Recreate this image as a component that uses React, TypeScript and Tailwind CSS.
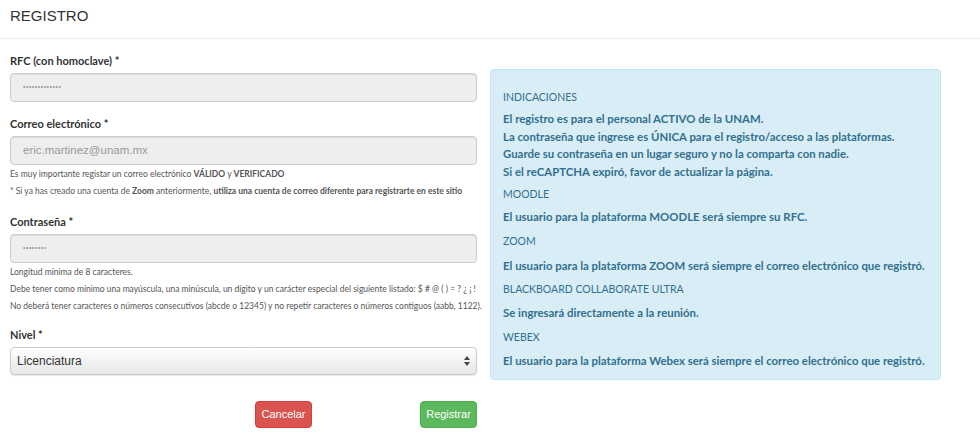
const label = "text-[11px] leading-[16px] font-bold text-[#333] font-['Lato',sans-serif]";
const input =
  "h-[29px] w-full rounded-[4px] border border-[#ccc] bg-[#eee] px-[12px] flex items-center text-[11.5px] text-[#999] font-['Liberation_Sans',Arial,sans-serif] shadow-[inset_0_1px_1px_rgba(0,0,0,0.075)]";
const help = "text-[8.5px] leading-[17px] text-[#555] whitespace-nowrap font-['Lato',sans-serif]";

const Registro = () => {
  return (
    <div className="min-h-screen bg-white">
      <div className="h-[39px] border-b border-[#eee] px-[10px] pt-[7px]">
        <h1 className="text-[15px] leading-[18px] text-[#333] font-['Liberation_Sans',Arial,sans-serif]">REGISTRO</h1>
      </div>

      <div className="flex gap-[13px] pl-[10px]">
        {/* formulario */}
        <div className="w-[467px] shrink-0">
          <div className={`${label} mt-[14px] mb-[4px]`}>RFC (con homoclave) *</div>
          <div className={input}>
            <span className="text-[7px] tracking-[0.5px]">•••••••••••••</span>
          </div>

          <div className={`${label} mt-[14px] mb-[4px]`}>Correo electrónico *</div>
          <div className={input}>eric.martinez@unam.mx</div>
          <div className="pt-[1px]">
            <p className={help}>
              Es muy importante registar un correo electrónico <b>VÁLIDO</b> y <b>VERIFICADO</b>
            </p>
            <p className={help}>
              * Si ya has creado una cuenta de <b>Zoom</b> anteriormente,{' '}
              <b>utiliza una cuenta de correo diferente para registrarte en este sitio</b>
            </p>
          </div>

          <div className={`${label} mt-[14px] mb-[4px]`}>Contraseña *</div>
          <div className={input}>
            <span className="text-[7px] tracking-[0.5px]">••••••••</span>
          </div>
          <div className="pt-[1px]">
            <p className={help}>Longitud mínima de 8 caracteres.</p>
            <p className={help}>
              Debe tener como mínimo una mayúscula, una minúscula, un dígito y un carácter especial del siguiente listado: $ # @ ( ) = ? ¿ ¡ !
            </p>
            <p className={help}>
              No deberá tener caracteres o números consecutivos (abcde o 12345) y no repetir caracteres o números contiguos (aabb, 1122).
            </p>
          </div>

          <div className={`${label} mt-[12px] mb-[4px]`}>Nivel *</div>
          <div className="h-[28px] w-full rounded-[4px] border border-[#ccc] bg-gradient-to-b from-white to-[#e6e6e6] pl-[6px] pr-[6px] flex items-center justify-between text-[12px] text-[#333] font-['Liberation_Sans',Arial,sans-serif] shadow-[0_1px_1px_rgba(0,0,0,0.1)]">
            <span>Licenciatura</span>
            <svg width="6" height="10" viewBox="0 0 6 10" className="text-[#444]">
              <path d="M3 0 L6 4 L0 4 Z" fill="currentColor" />
              <path d="M0 6 L6 6 L3 10 Z" fill="currentColor" />
            </svg>
          </div>

          <div className="mt-[26px] flex">
            <button className="ml-[245px] h-[27px] w-[57px] rounded-[4px] border border-[#d43f3a] bg-[#d9534f] text-[11px] text-white font-['Liberation_Sans',Arial,sans-serif]">
              Cancelar
            </button>
            <button className="ml-auto h-[27px] w-[57px] rounded-[4px] border border-[#4cae4c] bg-[#5cb85c] text-[11px] text-white font-['Liberation_Sans',Arial,sans-serif]">
              Registrar
            </button>
          </div>
        </div>

        {/* indicaciones */}
        <div className="mt-[30px] h-[311px] w-[451px] shrink-0 rounded-[4px] border border-[#bce8f1] bg-[#d9edf7] px-[12px] pt-[18px] text-[#31708f] font-['Lato',sans-serif] text-[10.5px] leading-[18px]">
          <p>INDICACIONES</p>
          <div className="mt-[4px] text-[11.4px] font-bold leading-[17.7px]">
            <p>El registro es para el personal ACTIVO de la UNAM.</p>
            <p>La contraseña que ingrese es ÚNICA para el registro/acceso a las plataformas.</p>
            <p>Guarde su contraseña en un lugar seguro y no la comparta con nadie.</p>
            <p>Si el reCAPTCHA expiró, favor de actualizar la página.</p>
          </div>
          <p className="mt-[4px]">MOODLE</p>
          <p className="mt-[5px] text-[11.4px] font-bold">El usuario para la plataforma MOODLE será siempre su RFC.</p>
          <p className="mt-[6px]">ZOOM</p>
          <p className="mt-[7px] text-[11.4px] font-bold">El usuario para la plataforma ZOOM será siempre el correo electrónico que registró.</p>
          <p className="mt-[5px]">BLACKBOARD COLLABORATE ULTRA</p>
          <p className="mt-[6px] text-[11.4px] font-bold">Se ingresará directamente a la reunión.</p>
          <p className="mt-[6px]">WEBEX</p>
          <p className="mt-[6px] text-[11.4px] font-bold">El usuario para la plataforma Webex será siempre el correo electrónico que registró.</p>
        </div>
      </div>
    </div>
  );
};

export default function App() {
  return <Registro />;
}
